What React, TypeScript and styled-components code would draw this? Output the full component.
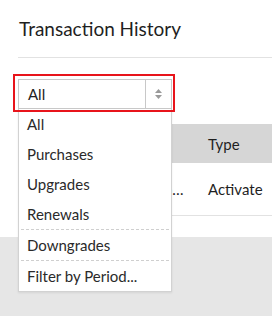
import React from "react";
import styled, { createGlobalStyle } from "styled-components";

const Global = createGlobalStyle`
  html, body { margin: 0; padding: 0; }
  body {
    background: #e6e6e6;
    font-family: Lato, "Open Sans", sans-serif;
    color: #222;
    overflow: hidden;
    width: 272px;
    height: 316px;
  }
`;

const Panel = styled.div`
  background: #fff;
  height: 237px;
`;

const Header = styled.div`
  margin-left: 18px;
  height: 58px;
  box-sizing: border-box;
  border-bottom: 1px solid #e2e2e2;
`;

const Title = styled.h1`
  margin: 0;
  padding: 17px 0 0 1px;
  font-size: 19px;
  line-height: 24px;
  font-weight: 400;
  color: #1f1f1f;
`;

const FilterWrap = styled.div`
  position: relative;
  z-index: 5;
  margin: 16px 0 0 13px;
  width: 162px;
`;

const Highlight = styled.div`
  position: relative;
  z-index: 2;
  border: 2px solid #e8141b;
  padding: 3px 1px 1px 3px;
`;

const Select = styled.div`
  display: flex;
  height: 30px;
  box-sizing: border-box;
  border: 1px solid #c8c8c8;
  background: #fff;
`;

const SelectValue = styled.div`
  flex: 1;
  padding-left: 9px;
  font-size: 15px;
  line-height: 28px;
  color: #222;
`;

const ArrowBox = styled.div`
  width: 25px;
  border-left: 1px solid #c8c8c8;
  display: flex;
  align-items: center;
  justify-content: center;
`;

const Dropdown = styled.ul`
  position: absolute;
  z-index: 1;
  top: 35px;
  left: 5px;
  width: 154px;
  box-sizing: border-box;
  margin: 0;
  padding: 0 2px;
  list-style: none;
  background: #fff;
  border: 1px solid #d2d2d2;
  border-top: none;
  box-shadow: 0 1px 2px rgba(0, 0, 0, 0.08);
`;

const Item = styled.li<{ $sep?: boolean }>`
  height: 30px;
  line-height: 30px;
  padding-left: 6px;
  font-size: 15px;
  color: #2a2a2a;
  border-top: ${(p) => (p.$sep ? "1px dashed #cfcfcf" : "none")};
`;

const Table = styled.div`
  margin: 12px 0 0 18px;
  font-size: 15px;
`;

const Row = styled.div<{ $head?: boolean }>`
  display: grid;
  grid-template-columns: 178px 1fr;
  height: ${(p) => (p.$head ? "39px" : "53px")};
  align-items: center;
  background: ${(p) => (p.$head ? "#d6d6d6" : "#fff")};
  border-bottom: ${(p) => (p.$head ? "none" : "1px solid #e2e2e2")};
  box-sizing: border-box;
`;

const Cell = styled.div<{ $last?: boolean }>`
  padding: ${(p) => (p.$last ? "0 0 0 12px" : "0 12px")};
  white-space: nowrap;
  overflow: ${(p) => (p.$last ? "visible" : "hidden")};
  text-overflow: ellipsis;
  color: #1f1f1f;
`;

const options = ["All", "Purchases", "Upgrades", "Renewals"];

export default function App() {
  return (
    <>
      <Global />
      <Panel>
        <Header>
          <Title>Transaction History</Title>
        </Header>
        <FilterWrap>
          <Highlight>
            <Select>
              <SelectValue>All</SelectValue>
              <ArrowBox>
                <svg width="7" height="10" viewBox="0 0 7 10">
                  <path d="M3.5 0 L7 4 L0 4 Z" fill="#9a9a9a" />
                  <path d="M0 6 L7 6 L3.5 10 Z" fill="#9a9a9a" />
                </svg>
              </ArrowBox>
            </Select>
          </Highlight>
          <Dropdown>
            {options.map((o) => (
              <Item key={o}>{o}</Item>
            ))}
            <Item $sep>Downgrades</Item>
            <Item $sep>Filter by Period...</Item>
          </Dropdown>
        </FilterWrap>
        <Table>
          <Row $head>
            <Cell>Date</Cell>
            <Cell $last>Type</Cell>
          </Row>
          <Row>
            <Cell>Subscription activation details</Cell>
            <Cell $last>Activate</Cell>
          </Row>
        </Table>
      </Panel>
    </>
  );
}
